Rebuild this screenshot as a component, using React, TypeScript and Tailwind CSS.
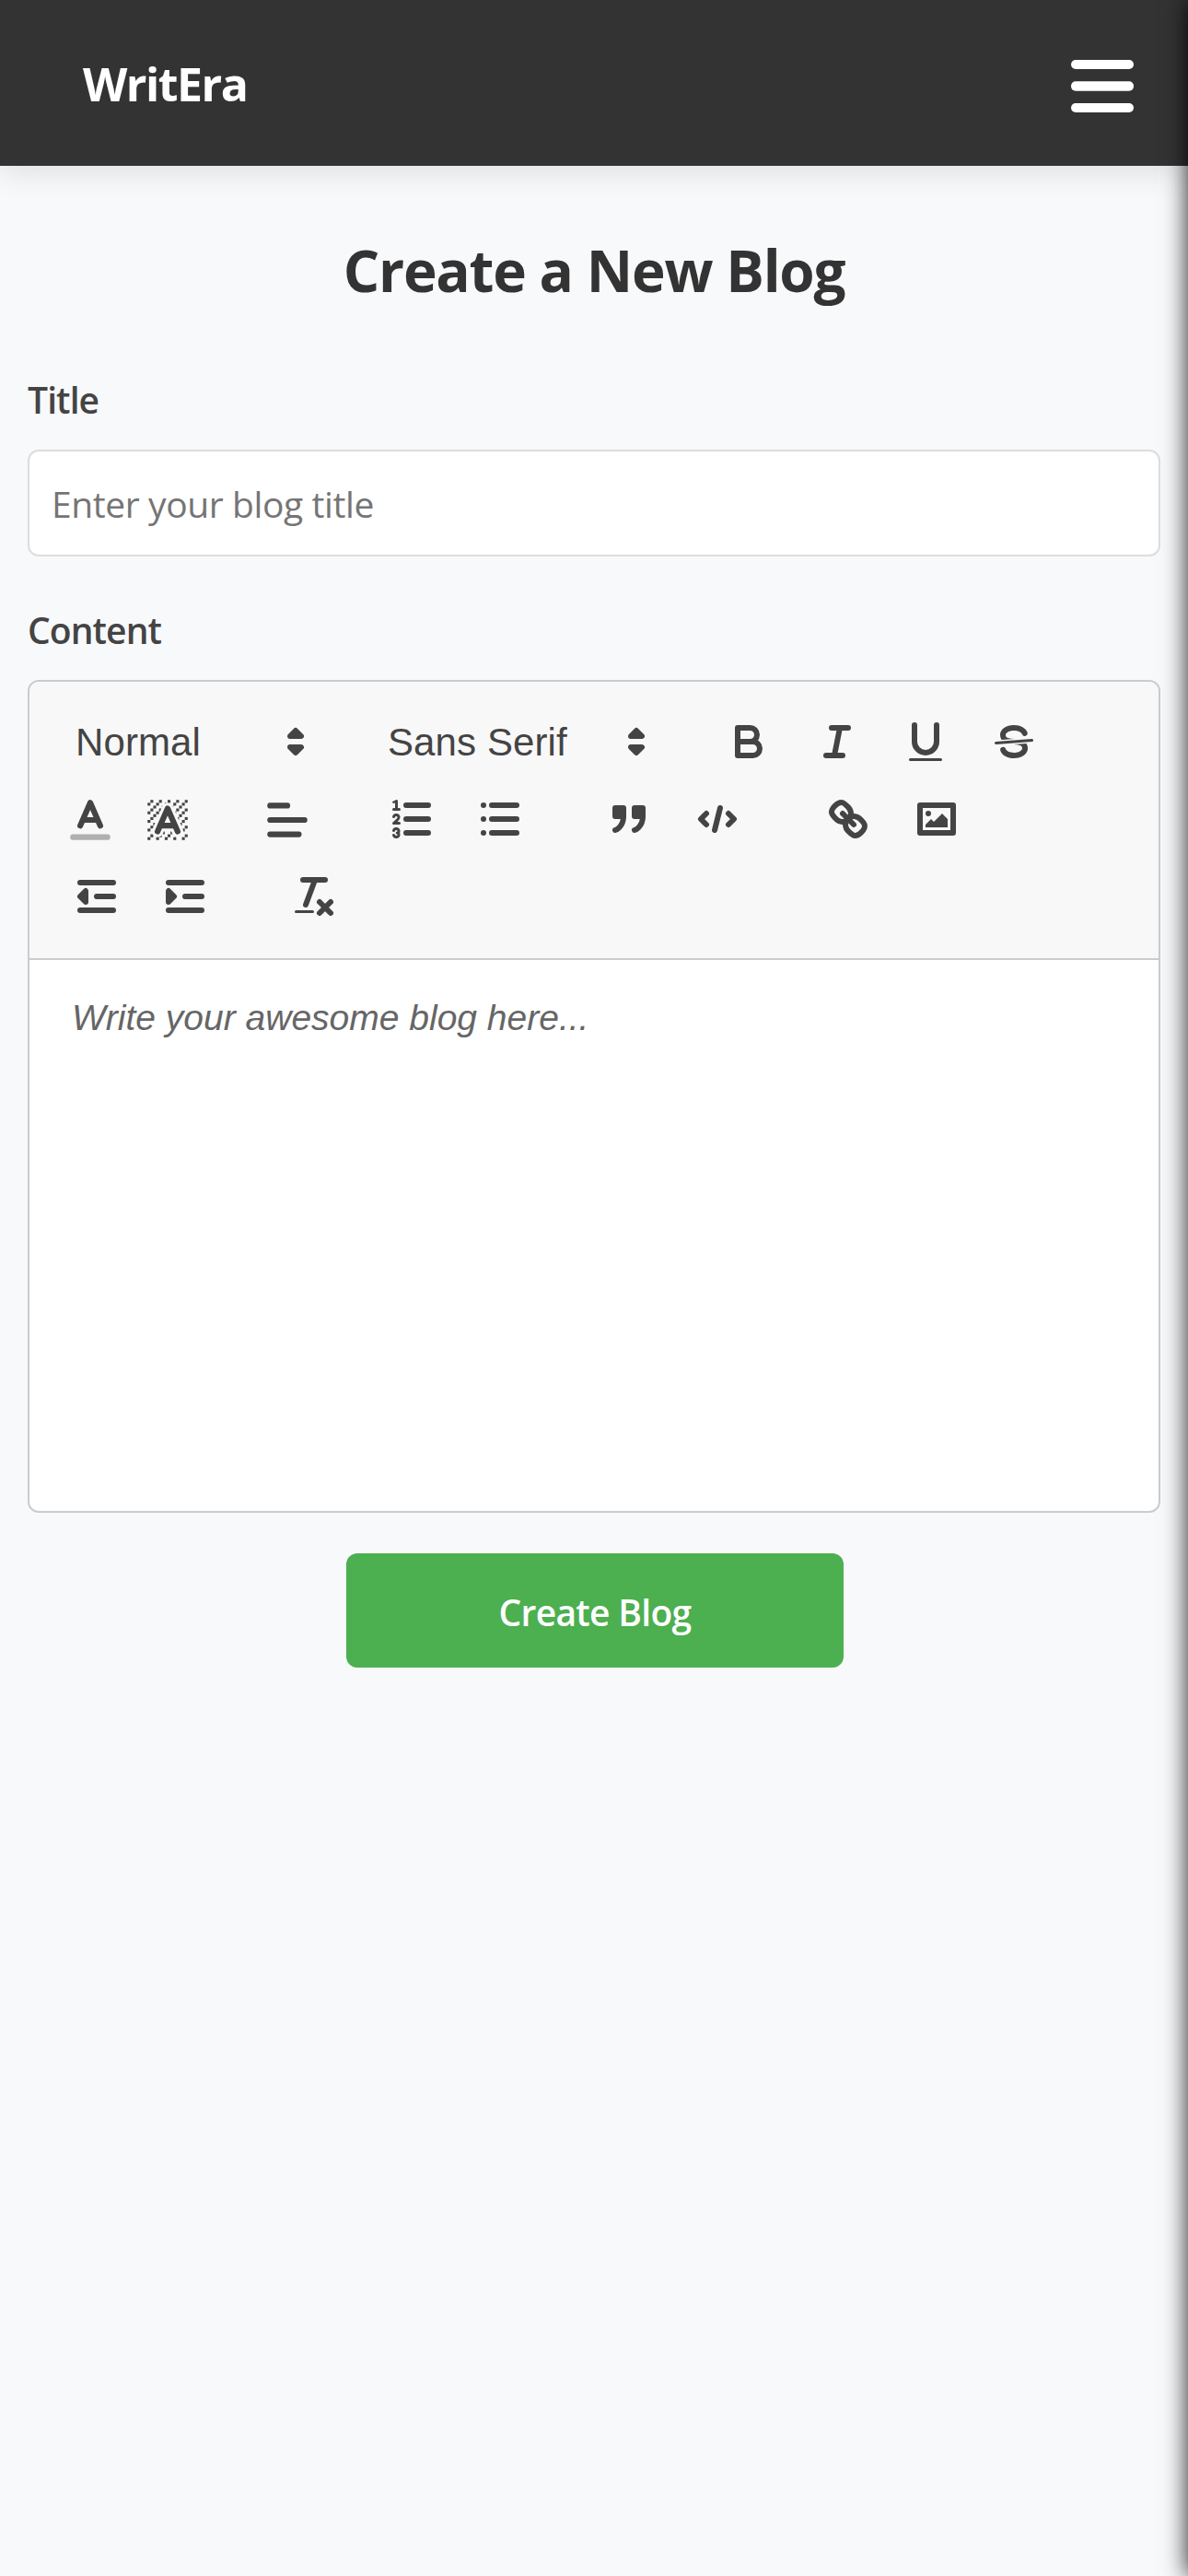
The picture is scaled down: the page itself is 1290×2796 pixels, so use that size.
import type { ReactNode } from "react";

const UI = "font-['Open_Sans','Noto_Sans',sans-serif]";
const ARIAL = "font-['Liberation_Sans',Arial,sans-serif]";

function Icon({ children, className = "size-[54px]" }: { children: ReactNode; className?: string }) {
  return (
    <svg
      viewBox="0 0 18 18"
      className={`block shrink-0 ${className}`}
      fill="none"
      stroke="#444"
      strokeWidth="2"
      strokeLinecap="round"
      strokeLinejoin="round"
    >
      {children}
    </svg>
  );
}

function ToolButton({ label, children }: { label: string; children: ReactNode }) {
  return (
    <button aria-label={label} className="flex h-[84px] w-24 items-center justify-center">
      <Icon>{children}</Icon>
    </button>
  );
}

function PickerButton({ label, children }: { label: string; children: ReactNode }) {
  return (
    <button aria-label={label} className="flex h-[84px] w-[84px] items-center justify-center pt-0.5">
      <Icon className="size-14">{children}</Icon>
    </button>
  );
}

function SelectPicker({ label, className }: { label: string; className: string }) {
  return (
    <div className={`flex h-[84px] items-center justify-between text-[42px] leading-none text-[#444] ${ARIAL} ${className}`}>
      <span className="mt-0.5 tracking-[0.1px] whitespace-nowrap">{label}</span>
      <Icon>
        <polygon points="7 11 9 13 11 11 7 11" fill="#444" />
        <polygon points="7 7 9 5 11 7 7 7" fill="#444" />
      </Icon>
    </div>
  );
}

// Unit squares of the hatched highlight swatch, as [x, y].
const HATCH = [
  [4, 4], [2, 6], [3, 5], [4, 7], [2, 12], [2, 9], [2, 15], [3, 8], [12, 2], [11, 3], [2, 3], [6, 2],
  [3, 2], [5, 3], [9, 2], [15, 14], [13, 7], [15, 5], [14, 6], [15, 8], [14, 9], [14, 3], [15, 2],
  [12, 5], [13, 4], [9, 14], [8, 15], [5, 15], [11, 15], [14, 15], [15, 11],
];

function Toolbar() {
  return (
    <div className="h-[302px] border-b-2 border-[#ccc] bg-[#f8f8f8] pt-[23px]">
      <div className="flex">
        <SelectPicker label="Normal" className="ml-[50px] w-[266px]" />
        <SelectPicker label="Sans Serif" className="ml-[73px] w-[297px]" />
        <div className="ml-[47px] flex">
          <ToolButton label="Bold">
            <path d="M5,4H9.5A2.5,2.5,0,0,1,12,6.5v0A2.5,2.5,0,0,1,9.5,9H5A0,0,0,0,1,5,9V4A0,0,0,0,1,5,4Z" />
            <path d="M5,9h5.5A2.5,2.5,0,0,1,13,11.5v0A2.5,2.5,0,0,1,10.5,14H5a0,0,0,0,1,0,0V9A0,0,0,0,1,5,9Z" />
          </ToolButton>
          <ToolButton label="Italic">
            <path d="M7 4H13M5 14H11M8 14L10 4" />
          </ToolButton>
          <ToolButton label="Underline">
            <path d="M5,3V9a4.012,4.012,0,0,0,4,4H9a4.012,4.012,0,0,0,4-4V3" />
            <rect x="3" y="15" width="12" height="1" rx="0.5" fill="#444" stroke="none" />
          </ToolButton>
          <ToolButton label="Strike">
            <path d="M15.5 8.5L2.5 9.5" strokeWidth="1" />
            <g fill="#444" stroke="none">
              <path d="M9.007,8C6.542,7.791,6,7.519,6,6.5,6,5.792,7.283,5,9,5c1.571,0,2.765.679,2.969,1.309a1,1,0,0,0,1.9-.617C13.356,4.106,11.354,3,9,3,6.2,3,4,4.538,4,6.5a3.2,3.2,0,0,0,.5,1.843Z" />
              <path d="M8.984,10C11.457,10.208,12,10.479,12,11.5c0,0.708-1.283,1.5-3,1.5-1.571,0-2.765-.679-2.969-1.309a1,1,0,1,0-1.9.617C4.644,13.894,6.646,15,9,15c2.8,0,5-1.538,5-3.5a3.2,3.2,0,0,0-.5-1.843Z" />
            </g>
          </ToolButton>
        </div>
      </div>

      <div className="flex">
        <div className="ml-6 flex">
          <PickerButton label="Text color">
            <path d="M3 15H15" opacity="0.4" />
            <path d="M5.5 11L9 3L12.5 11M11.63 9H6.38" />
          </PickerButton>
          <PickerButton label="Highlight color">
            <g fill="#444" stroke="none">
              {HATCH.map(([x, y]) => (
                <rect key={`${x}-${y}`} x={x} y={y} width="1" height="1" />
              ))}
              <polygon points="6 6.868 6 6 5 6 5 7 5.942 7 6 6.868" />
              <polygon points="6.817 5 6 5 6 6 6.38 6 6.817 5" />
              <polygon points="4 11.439 4 11 3 11 3 12 3.755 12 4 11.439" />
              <polygon points="4.63 10 4 10 4 11 4.192 11 4.63 10" />
              <path d="M10.832,4.2L11,4.582V4H10.708A1.948,1.948,0,0,1,10.832,4.2Z" />
              <path d="M7,4.582L7.168,4.2A1.929,1.929,0,0,1,7.292,4H7V4.582Z" />
              <path d="M8,13H7.683l-0.351.8a1.933,1.933,0,0,1-.124.2H8V13Z" />
              <path d="M9,3H8V3.282A1.985,1.985,0,0,1,9,3Z" />
              <polygon points="13.447 10.174 13.469 10.225 13.472 10.232 13.808 11 14 11 14 10 13.37 10 13.447 10.174" />
              <path d="M3.775,14H3v1H4V14.314A1.97,1.97,0,0,1,3.775,14Z" />
              <polygon points="12 6.868 12 6 11.62 6 12 6.868" />
              <polygon points="12.933 9 13 9 13 8 12.495 8 12.933 9" />
              <path d="M6,14.926V15H7V14.316A1.993,1.993,0,0,1,6,14.926Z" />
              <path d="M10.668,13.8L10.317,13H10v1h0.792A1.947,1.947,0,0,1,10.668,13.8Z" />
              <path d="M14.332,12.2a1.99,1.99,0,0,1,.166.8H15V12H14.245Z" />
            </g>
            <path d="M5.5 13L9 5L12.5 13M11.63 11H6.38" />
          </PickerButton>
        </div>
        <div className="ml-[46px] flex">
          <PickerButton label="Align">
            <path d="M3 9H15M3 14H13M3 4H9" />
          </PickerButton>
        </div>
        <div className="ml-[45px] flex">
          <ToolButton label="Ordered list">
            <path d="M7 4H15M7 9H15M7 14H15" />
            <g strokeWidth="1">
              <path d="M2.5 5.5H4.5" />
              <path d="M4.5,10.5h-2c0-.234,1.85-1.076,1.85-2.234A0.959,0.959,0,0,0,2.5,8.156" />
              <path d="M2.5,14.846a0.959,0.959,0,0,0,1.85-.109A0.7,0.7,0,0,0,3.75,14a0.688,0.688,0,0,0,.6-0.736,0.959,0.959,0,0,0-1.85-.109" />
            </g>
            <path
              fill="#444"
              stroke="none"
              d="M3.5,6A0.5,0.5,0,0,1,3,5.5V3.085l-0.276.138A0.5,0.5,0,0,1,2.053,3c-0.124-.247-0.023-0.324.224-0.447l1-.5A0.5,0.5,0,0,1,4,2.5v3A0.5,0.5,0,0,1,3.5,6Z"
            />
          </ToolButton>
          <ToolButton label="Bullet list">
            <path d="M6 4H15M6 9H15M6 14H15M3 4H3M3 9H3M3 14H3" />
          </ToolButton>
        </div>
        <div className="ml-11 flex">
          <ToolButton label="Blockquote">
            <g fill="#444">
              <rect x="4" y="5" width="3" height="3" />
              <rect x="11" y="5" width="3" height="3" />
              <path d="M7,8c0,4.031-3,5-3,5" />
              <path d="M14,8c0,4.031-3,5-3,5" />
            </g>
          </ToolButton>
          <ToolButton label="Code block">
            <path d="M5 7L3 9L5 11M13 7L15 9L13 11M10 5L8 13" />
          </ToolButton>
        </div>
        <div className="ml-[46px] flex">
          <ToolButton label="Link">
            <path d="M7 7L11 11" />
            <path d="M8.9,4.577a3.476,3.476,0,0,1,.36,4.679A3.476,3.476,0,0,1,4.577,8.9C3.185,7.5,2.035,6.4,4.217,4.217S7.5,3.185,8.9,4.577Z" />
            <path d="M13.423,9.1a3.476,3.476,0,0,0-4.679-.36,3.476,3.476,0,0,0,.36,4.679c1.392,1.392,2.5,2.542,4.679.36S14.815,10.5,13.423,9.1Z" />
          </ToolButton>
          <ToolButton label="Image">
            <rect x="3" y="4" width="12" height="10" />
            <g fill="#444" stroke="none">
              <circle cx="6" cy="7" r="1" />
              <polygon points="5 12 5 11 7 9 8 10 11 7 13 9 13 12 5 12" />
            </g>
          </ToolButton>
        </div>
      </div>

      <div className="flex">
        <div className="ml-[25px] flex">
          <ToolButton label="Outdent">
            <path d="M3 14H15M3 4H15M9 9H15" />
            <polygon points="5 7 5 11 3 9" fill="#444" />
          </ToolButton>
          <ToolButton label="Indent">
            <path d="M3 14H15M3 4H15M9 9H15" />
            <polygon points="3 7 3 11 5 9" fill="#444" />
          </ToolButton>
        </div>
        <div className="ml-11 flex">
          <ToolButton label="Clear formatting">
            <path d="M5 3H13M6 12L9.35 3M11 11L15 15M15 11L11 15" />
            <rect x="2" y="14" width="7" height="1" rx="0.5" fill="#444" stroke="none" />
          </ToolButton>
        </div>
      </div>
    </div>
  );
}

export default function App() {
  return (
    <div className={`relative min-h-[2796px] w-full overflow-hidden bg-[#f8f9fb] ${UI}`}>
      <header className="flex h-[180px] items-center justify-between bg-[#333] pr-[59px] pl-[90px] shadow-[0_8px_32px_rgba(0,0,0,0.1)]">
        <span className="mt-0.5 text-[50px] leading-none font-bold tracking-[-1.5px] text-white">WritEra</span>
        <button aria-label="Menu" className="mt-[7px]">
          <svg viewBox="0 0 68 57" className="block h-[57px] w-[68px]" fill="#fff">
            <rect width="68" height="10" rx="5" />
            <rect y="23.3" width="68" height="10.4" rx="5" />
            <rect y="47" width="68" height="10" rx="5" />
          </svg>
        </button>
      </header>

      <main className="px-[30px]">
        <h1 className="pt-[77px] text-center text-[62px] leading-[72px] font-bold tracking-[-1.2px] text-[#333]">
          Create a New Blog
        </h1>

        <label className="mt-[78px] block text-[39px] leading-[54px] font-semibold tracking-[-0.9px] text-[#444]">
          <span>Title</span>
        </label>
        <input
          placeholder="Enter your blog title"
          className="mt-[27px] block h-[116px] w-full rounded-xl border-2 border-[#ddd] bg-white px-6 text-[39px] tracking-[-0.4px] placeholder:text-[#757575]"
        />

        <label className="mt-[53px] block text-[39px] leading-[54px] font-semibold tracking-[-0.9px] text-[#444]">
          <span>Content</span>
        </label>
        <section className="mt-[27px] h-[904px] overflow-hidden rounded-xl border-2 border-[#ccc] bg-white">
          <Toolbar />
          <p className={`mt-[39px] ml-[46px] text-[39px] leading-[48px] text-[#666] italic ${ARIAL}`}>
            <span>Write your awesome blog here...</span>
          </p>
        </section>

        <button className="mx-auto mt-11 block h-[124px] w-[540px] translate-x-px rounded-xl bg-[#4caf50] pt-1 text-[39px] font-semibold tracking-[-0.7px] text-white">
          <span>Create Blog</span>
        </button>
      </main>

      <aside className="absolute top-0 left-full h-full w-[600px] bg-[#333] shadow-[0_0_25px_rgba(0,0,0,0.88)]" />
    </div>
  );
}
